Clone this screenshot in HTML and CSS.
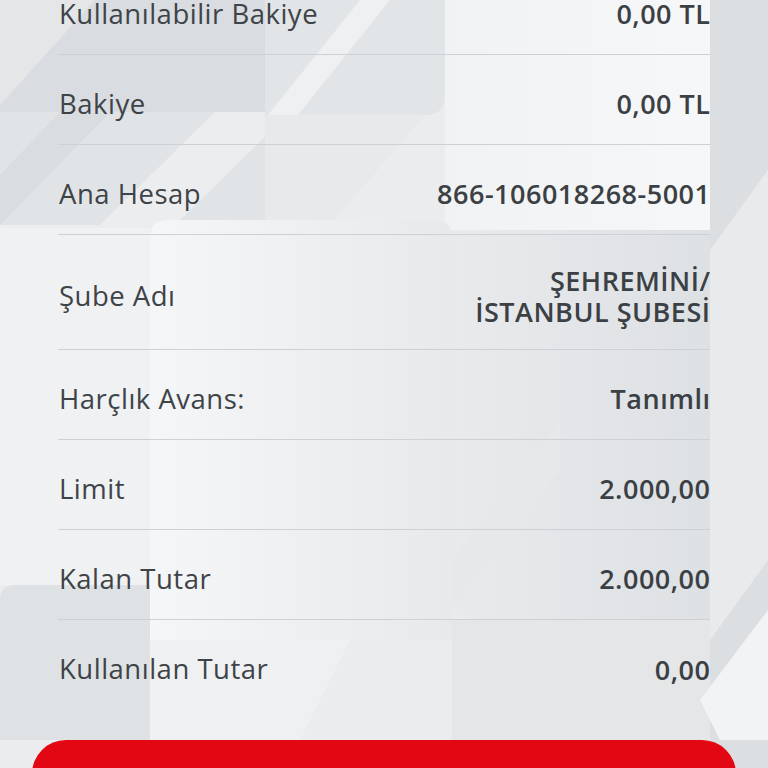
FILE: index.html
```html
<!DOCTYPE html>
<html lang="tr">
<head>
<meta charset="utf-8">
<title>Hesap Detayı</title>
<link rel="stylesheet" href="styles.css">
</head>
<body>
<div class="bg" aria-hidden="true">
  <svg width="768" height="768" viewBox="0 0 768 768">
    <defs>
      <linearGradient id="gA" x1="0" y1="0" x2="1" y2="0">
        <stop offset="0" stop-color="#f5f6f7"/>
        <stop offset="1" stop-color="#e7e9eb"/>
      </linearGradient>
      <linearGradient id="gC" x1="0" y1="0" x2="1" y2="0">
        <stop offset="0" stop-color="#e8eaec"/>
        <stop offset="1" stop-color="#dee1e4"/>
      </linearGradient>
      <linearGradient id="gT" x1="0" y1="0" x2="1" y2="0">
        <stop offset="0" stop-color="#f1f2f3"/>
        <stop offset="1" stop-color="#f6f7f8"/>
      </linearGradient>
    </defs>
    <rect x="0" y="0" width="768" height="768" fill="#eaeced"/>
    <!-- top-left area -->
    <polygon points="0,0 265,0 265,112 0,112" fill="#d9dce0"/>
    <polygon points="0,0 95,0 0,105" fill="#e4e6e8"/>
    <!-- band below -->
    <polygon points="0,112 265,112 265,225 0,225" fill="#e1e4e6"/>
    <polygon points="0,225 0,175 60,112 110,112 0,225" fill="#dadde0"/>
    <polygon points="100,225 215,112 290,112 175,225" fill="#ebedef"/>
    <!-- rounded top box -->
    <path d="M265,0 H445 V95 Q445,115 425,115 H265 Z" fill="#e2e5e7"/>
    <polygon points="268,115 360,0 390,0 298,115" fill="#eff0f2"/>
    <polygon points="265,115 265,225 330,225 425,115" fill="#e7e9eb"/>
    <rect x="445" y="0" width="265" height="230" fill="url(#gT)"/>
    <!-- big light box -->
    <path d="M150,238 Q150,220 168,220 H435 Q452,220 452,238 V640 H150 Z" fill="url(#gA)"/>
    <path d="M452,230 H710 V620 H480 Q452,620 452,600 Z" fill="url(#gC)"/>
    <polygon points="0,228 150,228 150,585 0,585" fill="#eff1f2"/>
    <polygon points="452,560 560,420 560,470 452,610" fill="#e6e8ea"/>
    <!-- bottom-left -->
    <path d="M0,600 Q0,585 15,585 H150 V740 H0 Z" fill="#dfe2e4"/>
    <polygon points="150,640 350,640 300,740 150,740" fill="#eef0f1"/>
    <polygon points="452,620 710,620 710,740 452,740" fill="#e4e6e8"/>
    <!-- right strip -->
    <polygon points="710,0 768,0 768,768 710,768" fill="#dcdfe2"/>
    <polygon points="710,250 768,170 768,560 710,640" fill="#e8eaec"/>
    <polygon points="700,700 768,610 768,740 720,740" fill="#f2f3f4"/>
  </svg>
</div>
<main class="page">
  <ul class="list">
    <li class="row"><span class="label">Kullanılabilir Bakiye</span><span class="value">0,00 TL</span></li>
    <li class="row"><span class="label">Bakiye</span><span class="value">0,00 TL</span></li>
    <li class="row"><span class="label">Ana Hesap</span><span class="value">866-106018268-5001</span></li>
    <li class="row row-tall"><span class="label">Şube Adı</span><span class="value">ŞEHREMİNİ/<br>İSTANBUL ŞUBESİ</span></li>
    <li class="row"><span class="label">Harçlık Avans:</span><span class="value">Tanımlı</span></li>
    <li class="row"><span class="label">Limit</span><span class="value">2.000,00</span></li>
    <li class="row"><span class="label">Kalan Tutar</span><span class="value">2.000,00</span></li>
    <li class="row row-last"><span class="label">Kullanılan Tutar</span><span class="value">0,00</span></li>
  </ul>
  <button class="cta" type="button"></button>
</main>
</body>
</html>
```

FILE: styles.css
```css
* { box-sizing: border-box; }
html, body {
  margin: 0;
  padding: 0;
  width: 768px;
  height: 768px;
  overflow: hidden;
}
body {
  position: relative;
  font-family: "Open Sans", Lato, "DejaVu Sans", sans-serif;
  color: #3d4247;
  background: #eaeced;
}
.bg {
  position: absolute;
  inset: 0;
  z-index: 0;
}
.bg svg { display: block; }
.page {
  position: relative;
  z-index: 1;
  display: flex;
  flex-direction: column;
}
.list {
  list-style: none;
  margin: -35px 58px 0 58px;
  padding: 0;
}
.row {
  display: flex;
  justify-content: space-between;
  align-items: center;
  height: 90px;
  padding-top: 8px;
  border-bottom: 1px solid #cdd0d4;
}
.row-tall { height: 115px; }
.row-last { border-bottom: none; }
.label {
  font-size: 27.5px;
  font-weight: 400;
  letter-spacing: 0.5px;
  color: #3e4348;
  padding-left: 1px;
  line-height: 36px;
}
.value {
  font-size: 27px;
  font-weight: 600;
  letter-spacing: 0.5px;
  color: #3b4045;
  text-align: right;
  line-height: 31px;
  margin-right: -0.5px;
}
.cta {
  margin: 30px 32px 0 32px;
  height: 120px;
  border: none;
  border-radius: 34px;
  background: #e30613;
}
```
